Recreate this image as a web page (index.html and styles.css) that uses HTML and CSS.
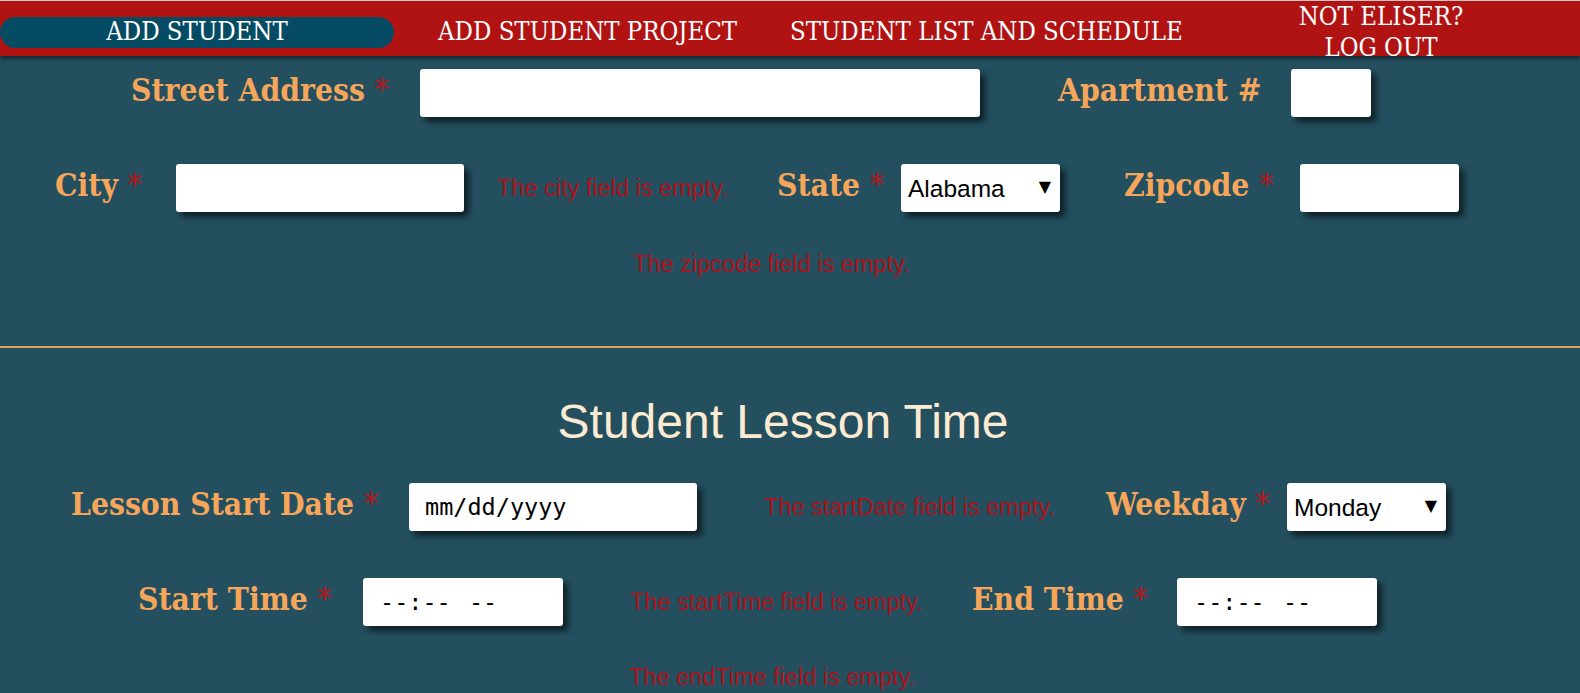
FILE: index.html
```html
<!DOCTYPE html>
<html lang="en">
<head>
<meta charset="utf-8">
<title>Add Student</title>
<link rel="stylesheet" href="styles.css">
</head>
<body>
<header class="topnav">
  <a class="nav-item nav-active">ADD STUDENT</a>
  <a class="nav-item nav-project">ADD STUDENT PROJECT</a>
  <a class="nav-item nav-list">STUDENT LIST AND SCHEDULE</a>
  <a class="nav-item nav-logout">NOT ELISER?<br>LOG OUT</a>
</header>
<main class="form">
  <div class="row row-address">
    <label class="field-label">Street Address <span class="req">*</span></label>
    <div class="cell"><input class="box w-street" type="text"></div>
    <label class="field-label">Apartment #</label>
    <div class="cell"><input class="box w-apt" type="text"></div>
  </div>
  <div class="row row-city">
    <label class="field-label">City <span class="req">*</span></label>
    <div class="cell"><input class="box w-city" type="text"></div>
    <span class="error">The city field is empty.</span>
    <label class="field-label">State <span class="req">*</span></label>
    <div class="cell"><div class="select w-select"><select class="select-input"><option>Alabama</option></select></div></div>
    <label class="field-label">Zipcode <span class="req">*</span></label>
    <div class="cell"><input class="box w-zip" type="text"></div>
  </div>
  <div class="error-row err-zip"><span class="error">The zipcode field is empty.</span></div>
  <hr class="divider">
  <h2 class="section-title">Student Lesson Time</h2>
  <div class="row row-lesson">
    <label class="field-label">Lesson Start Date <span class="req">*</span></label>
    <div class="cell"><input class="box box-mono w-date" type="text" value="mm/dd/yyyy" readonly></div>
    <span class="error">The startDate field is empty.</span>
    <label class="field-label">Weekday <span class="req">*</span></label>
    <div class="cell"><div class="select w-select"><select class="select-input"><option>Monday</option></select></div></div>
  </div>
  <div class="row row-time">
    <label class="field-label">Start Time <span class="req">*</span></label>
    <div class="cell"><input class="box box-mono box-time w-time" type="text" value="--:-- --" readonly></div>
    <span class="error">The startTime field is empty.</span>
    <label class="field-label">End Time <span class="req">*</span></label>
    <div class="cell"><input class="box box-mono box-time w-time" type="text" value="--:-- --" readonly></div>
  </div>
  <div class="error-row err-end"><span class="error">The endTime field is empty.</span></div>
  <div class="bottom-strip"></div>
</main>
</body>
</html>
```
FILE: styles.css
```css
html, body {
  margin: 0;
  padding: 0;
}
body {
  background: #234f5f;
  overflow: hidden;
  height: 693px;
  display: flex;
  flex-direction: column;
}
.topnav {
  flex: none;
  display: grid;
  grid-template-columns: 394px 396px 491px 200px;
  align-items: center;
  height: 55px;
  background: #b11313;
  border-top: 1px solid #c6c6c6;
  box-shadow: 0 3px 4px rgba(0, 0, 0, 0.45);
  position: relative;
  font-family: "DejaVu Serif Condensed", "DejaVu Serif", serif;
  font-stretch: condensed;
  font-size: 25.5px;
  color: #ffffff;
}
.nav-item {
  color: #ffffff;
  white-space: nowrap;
}
.nav-active {
  box-sizing: border-box;
  background: #054b63;
  height: 31px;
  line-height: 29px;
  padding-bottom: 2px;
  border-radius: 16px;
  text-align: center;
}
.nav-project {
  padding-left: 44px;
  padding-bottom: 3px;
}
.nav-list {
  padding-bottom: 3px;
}
.nav-logout {
  text-align: center;
  line-height: 31px;
}
.form {
  flex: 1;
  display: flex;
  flex-direction: column;
}
.row {
  display: grid;
  align-items: center;
  height: 48px;
}
.row-address {
  grid-template-columns: 289px 638px 233px 80px;
  padding-left: 131px;
  margin-top: 13px;
}
.row-city {
  grid-template-columns: 121px 321px 280px 124px 223px 176px 159px;
  padding-left: 55px;
  margin-top: 47px;
}
.row-lesson {
  grid-template-columns: 338px 355px 342px 181px 159px;
  padding-left: 71px;
  margin-top: 34px;
}
.row-time {
  grid-template-columns: 225px 267px 342px 205px 200px;
  padding-left: 138px;
  margin-top: 47px;
}
.field-label {
  font-family: "DejaVu Serif Condensed", "DejaVu Serif", serif;
  font-stretch: condensed;
  font-weight: bold;
  font-size: 31.5px;
  color: #f6a65b;
  white-space: nowrap;
  padding-bottom: 8px;
}
.req {
  color: #b3161b;
  font-weight: normal;
}
.cell {
  display: flex;
  align-items: center;
}
.box {
  display: block;
  box-sizing: border-box;
  height: 48px;
  border: none;
  border-radius: 3px;
  background: #ffffff;
  box-shadow: 5px 5px 6px rgba(0, 0, 0, 0.6);
  padding: 0 16px;
  margin: 0;
  outline: none;
}
.box-mono {
  font-family: "DejaVu Sans Mono", monospace;
  font-size: 23.5px;
  color: #000000;
}
.box-time {
  padding-left: 17px;
  word-spacing: 4px;
}
.w-street { width: 560px; }
.w-apt { width: 80px; }
.w-city { width: 288px; }
.w-zip { width: 159px; }
.w-date { width: 288px; }
.w-time { width: 200px; }
.select {
  position: relative;
  height: 48px;
  border-radius: 3px;
  background: #ffffff;
  box-shadow: 5px 5px 6px rgba(0, 0, 0, 0.6);
}
.w-select { width: 159px; }
.select-input {
  appearance: none;
  -webkit-appearance: none;
  border: none;
  background: transparent;
  width: 100%;
  height: 48px;
  padding: 0 0 0 7px;
  margin: 0;
  font-family: "Liberation Sans", Arial, sans-serif;
  font-size: 24.5px;
  color: #000000;
  outline: none;
}
.select::after {
  content: "\25BC";
  position: absolute;
  right: 9px;
  top: 13px;
  font-family: "DejaVu Sans", sans-serif;
  font-size: 16px;
  color: #000000;
  pointer-events: none;
}
.error {
  font-family: "Liberation Sans", Arial, sans-serif;
  font-size: 23.5px;
  color: #ac1219;
  white-space: nowrap;
}
.error-row {
  line-height: 28px;
}
.err-zip {
  padding-left: 633px;
  margin-top: 38px;
}
.err-end {
  padding-left: 629px;
  margin-top: 37px;
}
.divider {
  border: none;
  height: 2px;
  background: #dca660;
  margin: 65px 0 0 0;
  flex: none;
}
.section-title {
  font-family: "Liberation Sans", Arial, sans-serif;
  font-weight: normal;
  font-size: 48px;
  line-height: 55px;
  color: #fcebd2;
  text-align: center;
  margin: 46px 0 0 0;
  padding-right: 14px;
}
.bottom-strip {
  flex: none;
  height: 2px;
  margin-top: auto;
  background: #84a53c;
}
```
